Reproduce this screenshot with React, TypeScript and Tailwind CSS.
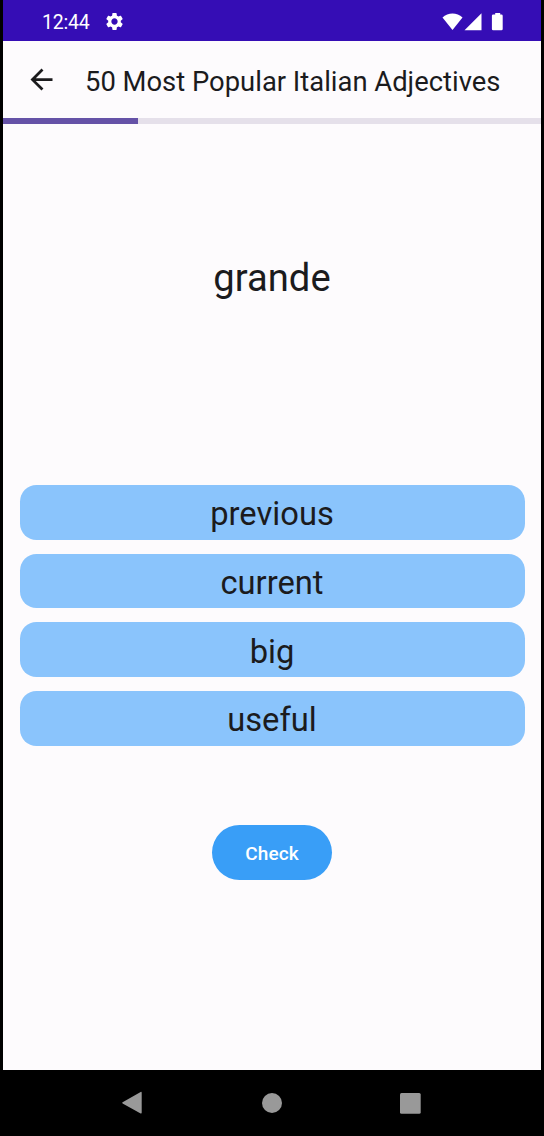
import React from "react";
import { MdSettings } from "react-icons/md";

const options = ["previous", "current", "big", "useful"];

function StatusBar() {
  return (
    <div className="flex h-[41px] items-center bg-[#350db5] pt-[3px] pl-[39px] pr-[38px] text-white">
      <span className="pt-[1px] text-[19.5px] leading-[20px] tracking-[-0.2px]">12:44</span>
      <MdSettings className="ml-[14px] -mt-[1px] size-[21px]" />
      <svg className="ml-auto h-[18px] w-[61px]" viewBox="0 0 61 18" fill="currentColor">
        <path d="M.5 4.4C6-.9 15-.9 20.5 4.4L10.5 17Z" />
        <path d="M39.5 .3V17.2H22.5Z" />
        <path d="M53.2 0h5v1.5h1.2q1.3 0 1.3 1.3v13.1q0 1.3-1.3 1.3h-8.2q-1.3 0-1.3-1.3V2.8q0-1.3 1.3-1.3h2z" />
      </svg>
    </div>
  );
}

function TopBar() {
  return (
    <header className="flex h-[77px] items-center pl-[22px]">
      <button aria-label="Back" className="size-[33px]">
        <svg viewBox="0 0 24 24" className="size-[33px]" fill="currentColor">
          <path d="M20 11H7.83l5.59-5.59L12 4l-8 8 8 8 1.41-1.41L7.83 13H20v-2z" />
        </svg>
      </button>
      <h1 className="ml-[27px] pt-[4px] text-[27.4px] leading-[28px] whitespace-nowrap">
        50 Most Popular Italian Adjectives
      </h1>
    </header>
  );
}

function NavigationBar() {
  return (
    <nav className="flex h-[66px] items-center justify-center bg-black">
      <svg viewBox="0 0 300 24" className="h-6 w-[300px]" fill="#999999">
        <path d="M18.2 1.2Q19.7 .3 19.7 1.8V21.6Q19.7 23.1 18.2 22.2L.6 12.4Q-.2 11.8.6 11.2Z" />
        <circle cx="150" cy="12" r="10" />
        <rect x="278" y="2" width="20.7" height="20.7" rx="1.5" />
      </svg>
    </nav>
  );
}

export default function App() {
  return (
    <div className="flex h-[1136px] w-[544px] flex-col bg-black font-['Roboto',sans-serif] text-[#1b1b1d]">
      <div className="mx-[3px] flex h-[1070px] flex-col bg-[#fdfbfd]">
        <StatusBar />
        <TopBar />
        <div className="h-[6px] bg-[#e5e0ea]">
          <div className="h-full w-1/4 bg-[#6552a7]" />
        </div>
        <main className="flex flex-col items-center">
          <p className="mt-[131px] h-[46px] text-[38.2px] leading-[46px]">grande</p>
          <div className="mt-[184px] flex w-[505px] flex-col gap-[14px]">
            {options.map((option) => (
              <button
                key={option}
                className="h-[54.7px] rounded-[16.5px] bg-[#8ac4fc] pt-[4px] text-[32.7px] leading-[34px]"
              >
                {option}
              </button>
            ))}
          </div>
          <button className="mt-[79.5px] h-[55px] w-[120px] rounded-full bg-[#399ef7] pt-[2px] text-[19px] leading-none font-medium tracking-[0.1px] text-white">
            Check
          </button>
        </main>
      </div>
      <NavigationBar />
    </div>
  );
}
